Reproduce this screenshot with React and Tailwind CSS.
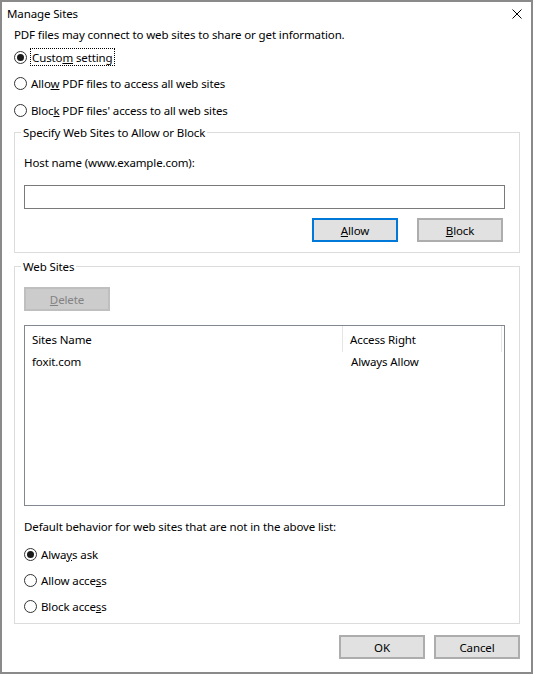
import React from "react";

function Radio({ checked, focus, children, className = "" }) {
  return (
    <div className={"flex items-center h-[18px] " + className}>
      <span className="w-[13px] h-[13px] rounded-full border border-[#333333] bg-white flex items-center justify-center shrink-0">
        {checked && <span className="w-[7px] h-[7px] rounded-full bg-[#1a1a1a]" />}
      </span>
      {focus ? (
        <span className="ml-[3px] h-[18px] px-[1px] flex items-center border border-dotted border-black">
          <span className="pt-[1px]">{children}</span>
        </span>
      ) : (
        <span className="ml-[4px] pt-[1px]">{children}</span>
      )}
    </div>
  );
}

function Button({ children, primary, disabled, className = "" }) {
  let look = "bg-[#e1e1e1] border-2 border-[#adadad] text-black";
  if (primary) look = "bg-[#e1e1e1] border-2 border-[#0078d7] text-black";
  if (disabled) look = "bg-[#cccccc] border-2 border-[#bfbfbf] text-[#838383]";
  return (
    <div className={"w-[86px] h-[24px] pt-[1px] flex items-center justify-center " + look + " " + className}>
      {children}
    </div>
  );
}

function Group({ label, className = "", children }) {
  return (
    <div className={"relative w-[506px] border border-[#dcdcdc] " + className}>
      <span className="absolute -top-[8px] left-[6px] px-[2px] bg-white leading-[16px]">{label}</span>
      {children}
    </div>
  );
}

export default function App() {
  return (
    <div className="w-[535px] h-[675px] bg-white text-[11.5px] tracking-[-0.12px] leading-[16px] text-black font-['Noto_Sans',sans-serif]">
      <div className="w-[533px] h-[674px] border-2 border-[#8a8a8a] flex flex-col">
        {/* title bar */}
        <div className="h-[22px] pt-[1px] flex items-center pl-[5px]">
          <span>Manage Sites</span>
          <svg className="ml-auto mr-[9px]" width="10" height="10" viewBox="0 0 10 10">
            <path d="M0.5 0.5 L9.5 9.5 M9.5 0.5 L0.5 9.5" stroke="#000" strokeWidth="1" fill="none" />
          </svg>
        </div>

        <div className="pl-[12px] flex flex-col">
          <div className="mt-[2px] h-[16px] pt-[1px]">PDF files may connect to web sites to share or get information.</div>

          <Radio checked focus className="mt-[6px]">
            Custo<u>m</u> setting
          </Radio>
          <Radio className="mt-[8px]">
            Allo<u>w</u> PDF files to access all web sites
          </Radio>
          <Radio className="mt-[9px]">
            Bloc<u>k</u> PDF files' access to all web sites
          </Radio>

          <Group label="Specify Web Sites to Allow or Block" className="mt-[13px] h-[121px]">
            <div className="pl-[9px] pt-[21px] flex flex-col">
              <div className="h-[16px] pt-[1px]">Host name (www.example.com):</div>
              <div className="mt-[15px] w-[481px] h-[24px] border border-[#7a7a7a] bg-white" />
              <div className="mt-[9px] w-[481px] pr-[2px] flex justify-end gap-[19px]">
                <Button primary>
                  <span><u>A</u>llow</span>
                </Button>
                <Button>
                  <span><u>B</u>lock</span>
                </Button>
              </div>
            </div>
          </Group>

          <Group label="Web Sites" className="mt-[13px] h-[358px]">
            <div className="pl-[9px] pt-[20px] flex flex-col">
              <Button disabled>
                <span><u>D</u>elete</span>
              </Button>

              <div className="mt-[14px] w-[481px] h-[181px] border border-[#828790] bg-white flex flex-col">
                <div className="h-[26px] flex">
                  <div className="w-[318px] pl-[7px] pt-[2px] flex items-center border-r border-[#e5e5e5]">Sites Name</div>
                  <div className="w-[159px] pl-[7px] pt-[2px] flex items-center border-r border-[#e5e5e5]">Access Right</div>
                </div>
                <div className="h-[18px] pt-[1px] flex items-center">
                  <div className="w-[319px] pl-[7px]">foxit.com</div>
                  <div className="pl-[7px]">Always Allow</div>
                </div>
              </div>

              <div className="mt-[12px] h-[16px] pt-[1px]">Default behavior for web sites that are not in the above list:</div>

              <Radio checked className="mt-[11px]">
                Alwa<u>y</u>s ask
              </Radio>
              <Radio className="mt-[8px]">
                Allow acce<u>s</u>s
              </Radio>
              <Radio className="mt-[8px]">
                Block acce<u>s</u>s
              </Radio>
            </div>
          </Group>

          <div className="mt-[11px] w-[506px] flex justify-end gap-[9px]">
            <Button>OK</Button>
            <Button>Cancel</Button>
          </div>
        </div>
      </div>
    </div>
  );
}
